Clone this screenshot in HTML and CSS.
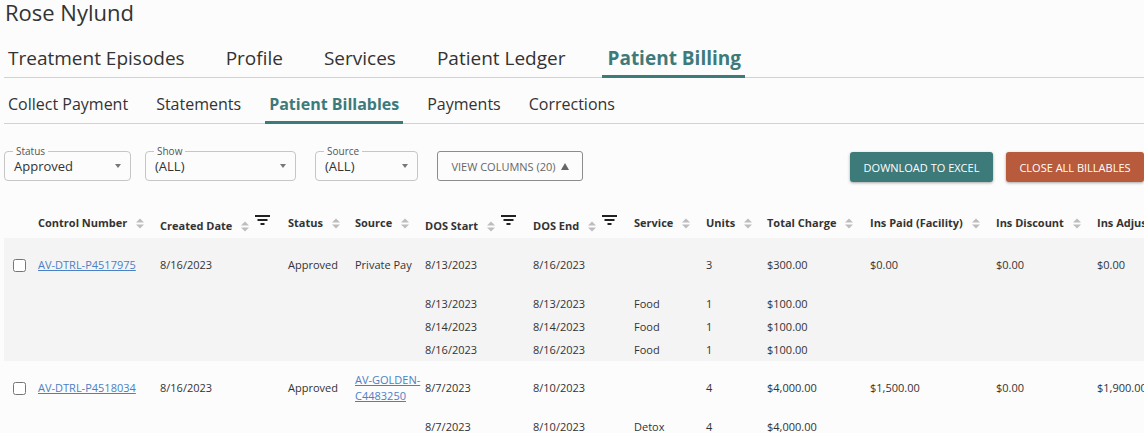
FILE: index.html
```html
<!DOCTYPE html>
<html lang="en">
<head>
<meta charset="utf-8">
<title>Rose Nylund - Patient Billables</title>
<link rel="stylesheet" href="styles.css">
</head>
<body>
<h1 class="patient-name">Rose Nylund</h1>

<nav class="tabs main-tabs">
  <a class="tab" href="#">Treatment Episodes</a>
  <a class="tab" href="#">Profile</a>
  <a class="tab" href="#">Services</a>
  <a class="tab" href="#">Patient Ledger</a>
  <a class="tab active" href="#">Patient Billing</a>
</nav>

<nav class="tabs sub-tabs">
  <a class="tab" href="#">Collect Payment</a>
  <a class="tab" href="#">Statements</a>
  <a class="tab active" href="#">Patient Billables</a>
  <a class="tab" href="#">Payments</a>
  <a class="tab" href="#">Corrections</a>
</nav>

<div class="toolbar">
  <div class="filters">
    <fieldset class="select select-status">
      <legend>Status</legend>
      <div class="select-value"><span>Approved</span><span class="caret"></span></div>
    </fieldset>
    <fieldset class="select select-show">
      <legend>Show</legend>
      <div class="select-value"><span>(ALL)</span><span class="caret"></span></div>
    </fieldset>
    <fieldset class="select select-source">
      <legend>Source</legend>
      <div class="select-value"><span>(ALL)</span><span class="caret"></span></div>
    </fieldset>
    <button class="btn-outline" type="button">VIEW COLUMNS (20) <span class="caret-up"></span></button>
  </div>
  <div class="actions">
    <button class="btn btn-teal" type="button">DOWNLOAD TO EXCEL</button>
    <button class="btn btn-rust" type="button">CLOSE ALL BILLABLES</button>
  </div>
</div>

<table class="billables">
  <colgroup>
    <col class="w-check">
    <col class="w-ctrl">
    <col class="w-created">
    <col class="w-status">
    <col class="w-source">
    <col class="w-dstart">
    <col class="w-dend">
    <col class="w-service">
    <col class="w-units">
    <col class="w-total">
    <col class="w-inspaid">
    <col class="w-insdisc">
    <col class="w-insadj">
  </colgroup>
  <thead>
    <tr>
      <th></th>
      <th><div class="th-inner"><span>Control Number</span><svg class="sort" width="8" height="11" viewBox="0 0 8 11"><path d="M0 4.5L4 0.5L8 4.5Z M0 6.5L4 10.5L8 6.5Z"/></svg></div></th>
      <th><div class="th-inner has-filter"><span>Created Date</span><svg class="sort" width="8" height="11" viewBox="0 0 8 11"><path d="M0 4.5L4 0.5L8 4.5Z M0 6.5L4 10.5L8 6.5Z"/></svg><svg class="filter" width="15" height="10" viewBox="0 0 15 10"><rect x="0" y="0" width="15" height="2"/><rect x="2.5" y="4" width="10" height="2"/><rect x="5.5" y="8" width="4" height="2"/></svg></div></th>
      <th><div class="th-inner"><span>Status</span><svg class="sort" width="8" height="11" viewBox="0 0 8 11"><path d="M0 4.5L4 0.5L8 4.5Z M0 6.5L4 10.5L8 6.5Z"/></svg></div></th>
      <th><div class="th-inner"><span>Source</span><svg class="sort" width="8" height="11" viewBox="0 0 8 11"><path d="M0 4.5L4 0.5L8 4.5Z M0 6.5L4 10.5L8 6.5Z"/></svg></div></th>
      <th><div class="th-inner has-filter"><span>DOS Start</span><svg class="sort" width="8" height="11" viewBox="0 0 8 11"><path d="M0 4.5L4 0.5L8 4.5Z M0 6.5L4 10.5L8 6.5Z"/></svg><svg class="filter" width="15" height="10" viewBox="0 0 15 10"><rect x="0" y="0" width="15" height="2"/><rect x="2.5" y="4" width="10" height="2"/><rect x="5.5" y="8" width="4" height="2"/></svg></div></th>
      <th><div class="th-inner has-filter"><span>DOS End</span><svg class="sort" width="8" height="11" viewBox="0 0 8 11"><path d="M0 4.5L4 0.5L8 4.5Z M0 6.5L4 10.5L8 6.5Z"/></svg><svg class="filter" width="15" height="10" viewBox="0 0 15 10"><rect x="0" y="0" width="15" height="2"/><rect x="2.5" y="4" width="10" height="2"/><rect x="5.5" y="8" width="4" height="2"/></svg></div></th>
      <th><div class="th-inner"><span>Service</span><svg class="sort" width="8" height="11" viewBox="0 0 8 11"><path d="M0 4.5L4 0.5L8 4.5Z M0 6.5L4 10.5L8 6.5Z"/></svg></div></th>
      <th><div class="th-inner"><span>Units</span><svg class="sort" width="8" height="11" viewBox="0 0 8 11"><path d="M0 4.5L4 0.5L8 4.5Z M0 6.5L4 10.5L8 6.5Z"/></svg></div></th>
      <th><div class="th-inner"><span>Total Charge</span><svg class="sort" width="8" height="11" viewBox="0 0 8 11"><path d="M0 4.5L4 0.5L8 4.5Z M0 6.5L4 10.5L8 6.5Z"/></svg></div></th>
      <th><div class="th-inner"><span>Ins Paid (Facility)</span><svg class="sort" width="8" height="11" viewBox="0 0 8 11"><path d="M0 4.5L4 0.5L8 4.5Z M0 6.5L4 10.5L8 6.5Z"/></svg></div></th>
      <th><div class="th-inner"><span>Ins Discount</span><svg class="sort" width="8" height="11" viewBox="0 0 8 11"><path d="M0 4.5L4 0.5L8 4.5Z M0 6.5L4 10.5L8 6.5Z"/></svg></div></th>
      <th><div class="th-inner"><span>Ins Adjustment</span><svg class="sort" width="8" height="11" viewBox="0 0 8 11"><path d="M0 4.5L4 0.5L8 4.5Z M0 6.5L4 10.5L8 6.5Z"/></svg></div></th>
    </tr>
  </thead>
  <tbody class="group group-shaded">
    <tr class="row-main">
      <td class="cell-check"><input type="checkbox"></td>
      <td><a class="link" href="#">AV-DTRL-P4517975</a></td>
      <td>8/16/2023</td>
      <td>Approved</td>
      <td>Private Pay</td>
      <td>8/13/2023</td>
      <td>8/16/2023</td>
      <td></td>
      <td>3</td>
      <td>$300.00</td>
      <td>$0.00</td>
      <td>$0.00</td>
      <td>$0.00</td>
    </tr>
    <tr class="row-sub">
      <td colspan="5"></td>
      <td>8/13/2023</td><td>8/13/2023</td><td>Food</td><td>1</td><td>$100.00</td><td></td><td></td><td></td>
    </tr>
    <tr class="row-sub">
      <td colspan="5"></td>
      <td>8/14/2023</td><td>8/14/2023</td><td>Food</td><td>1</td><td>$100.00</td><td></td><td></td><td></td>
    </tr>
    <tr class="row-sub">
      <td colspan="5"></td>
      <td>8/16/2023</td><td>8/16/2023</td><td>Food</td><td>1</td><td>$100.00</td><td></td><td></td><td></td>
    </tr>
  </tbody>
  <tbody class="group">
    <tr class="row-main">
      <td class="cell-check"><input type="checkbox"></td>
      <td><a class="link" href="#">AV-DTRL-P4518034</a></td>
      <td>8/16/2023</td>
      <td>Approved</td>
      <td><a class="link" href="#">AV-GOLDEN-C4483250</a></td>
      <td>8/7/2023</td>
      <td>8/10/2023</td>
      <td></td>
      <td>4</td>
      <td>$4,000.00</td>
      <td>$1,500.00</td>
      <td>$0.00</td>
      <td>$1,900.00</td>
    </tr>
    <tr class="row-sub">
      <td colspan="5"></td>
      <td>8/7/2023</td><td>8/10/2023</td><td>Detox</td><td>4</td><td>$4,000.00</td><td></td><td></td><td></td>
    </tr>
  </tbody>
</table>
</body>
</html>
```

FILE: styles.css
```css
* { box-sizing: border-box; }

html, body { margin: 0; padding: 0; }

body {
  width: 1144px;
  height: 433px;
  overflow: hidden;
  background: #fcfcfc;
  color: #333;
  font-family: "Open Sans", "Noto Sans", "Liberation Sans", sans-serif;
}

.patient-name {
  margin: 0;
  padding-left: 5px;
  font-size: 22px;
  line-height: 24px;
  font-weight: 400;
  color: #333;
}

/* ---------- tabs ---------- */
.tabs {
  display: flex;
  margin-left: 4px;
  border-bottom: 1px solid #d2d2d2;
}

.tab {
  padding: 0 4px;
  margin-bottom: -1px;
  border-bottom: 3px solid transparent;
  color: #333;
  text-decoration: none;
  white-space: nowrap;
}

.tab.active {
  color: #3d7a7a;
  font-weight: 700;
  border-bottom-color: #3d7a7a;
}

.main-tabs {
  margin-top: 21px;
  gap: 33px;
}

.main-tabs .tab {
  font-size: 19px;
  line-height: 26px;
  padding: 0 4px 4px 4px;
}

.main-tabs .tab.active {
  padding: 0 4px 4px 5px;
}

.sub-tabs {
  margin-top: 15px;
  gap: 20px;
}

.sub-tabs .tab {
  font-size: 16px;
  line-height: 22px;
  padding-bottom: 6px;
}

/* ---------- toolbar ---------- */
.toolbar {
  display: flex;
  justify-content: space-between;
  align-items: flex-start;
  margin: 21px 0 0 4px;
}

.filters {
  display: flex;
  align-items: flex-start;
}

.select {
  margin: 0;
  min-width: 0;
  padding: 0 9px 5px 9px;
  border: 1px solid #c6c6c6;
  border-radius: 4px;
}

.select legend {
  margin-left: -1px;
  padding: 0 3px;
  font-size: 10px;
  line-height: 12px;
  color: #555;
}

.select-value {
  display: flex;
  justify-content: space-between;
  align-items: center;
  font-size: 13px;
  line-height: 18px;
  color: #333;
}

.caret {
  width: 0;
  height: 0;
  border-left: 3.5px solid transparent;
  border-right: 3.5px solid transparent;
  border-top: 4px solid #777;
}

.select-status { width: 127px; margin-right: 14px; }
.select-show { width: 151px; margin-right: 19px; }
.select-source { width: 103px; margin-right: 19px; }

.btn-outline {
  display: flex;
  align-items: center;
  justify-content: center;
  gap: 5px;
  width: 146px;
  height: 30px;
  margin-top: 6px;
  padding: 0;
  border: 1px solid #8c8c8c;
  border-radius: 3px;
  background: transparent;
  color: #666;
  font-family: "Open Sans", sans-serif;
  font-size: 11px;
}

.caret-up {
  width: 0;
  height: 0;
  border-left: 4px solid transparent;
  border-right: 4px solid transparent;
  border-bottom: 7px solid #666;
}

.actions {
  display: flex;
  gap: 13px;
  margin-top: 7px;
}

.btn {
  height: 30px;
  padding: 0;
  border: 0;
  border-radius: 3px;
  color: #fff;
  font-family: "Open Sans", sans-serif;
  font-size: 11px;
  box-shadow: 0 1px 3px rgba(0, 0, 0, 0.35);
}

.btn-teal { width: 143px; background: #3d7a7a; }
.btn-rust { width: 138px; background: #b85a3c; }

/* ---------- table ---------- */
.billables {
  margin: 18px 0 0 4px;
  width: 1213px;
  border-collapse: collapse;
  table-layout: fixed;
  font-size: 11px;
  line-height: 16px;
  color: #333;
}

.w-check { width: 34px; }
.w-ctrl { width: 122px; }
.w-created { width: 128px; }
.w-status { width: 67px; }
.w-source { width: 70px; }
.w-dstart { width: 108px; }
.w-dend { width: 101px; }
.w-service { width: 72px; }
.w-units { width: 61px; }
.w-total { width: 103px; }
.w-inspaid { width: 126px; }
.w-insdisc { width: 101px; }
.w-insadj { width: 120px; }

.billables th,
.billables td {
  padding: 0;
  text-align: left;
  vertical-align: middle;
}

.billables thead th {
  height: 38px;
  padding-top: 8px;
  font-weight: 700;
  white-space: nowrap;
  background: #fcfcfc;
}

.th-inner {
  display: flex;
  align-items: center;
}

.th-inner.has-filter {
  padding-top: 6px;
}

.sort {
  flex: none;
  margin-left: 9px;
  fill: #bdbdbd;
}

.filter {
  flex: none;
  align-self: flex-start;
  margin-top: -3px;
  margin-left: 6px;
  fill: #222;
}

.group-shaded {
  background: #f4f4f4;
}

.row-main td { height: 54px; }
.row-sub td { height: 23px; }

.cell-check {
  padding-left: 9px !important;
}

.cell-check input {
  display: block;
  margin: 0;
  width: 13px;
  height: 13px;
}

.link {
  color: #4a80c4;
  text-decoration: underline;
}
```
